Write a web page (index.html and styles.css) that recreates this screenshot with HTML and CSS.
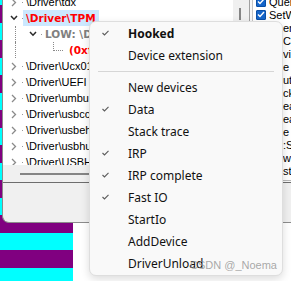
FILE: index.html
```html
<!DOCTYPE html>
<html>
<head>
  <meta charset="utf-8">
  <link rel="stylesheet" href="styles.css">
</head>
<body>
  <div class="window">
    <div class="panes">
      <div class="tree">
        <div class="tree-rows">
          <div class="tree-inner">
            <div class="row lvl0"><span class="exp"><svg width="6" height="9" viewBox="0 0 6 9"><path d="M1 1l3.5 3.5L1 8" class="closed"/></svg></span><span class="dot"></span><span class="label">\Driver\tdx</span></div>
            <div class="row lvl0"><span class="exp"><svg width="8" height="6" viewBox="0 0 8 6"><path d="M1 1l3 3.2L7 1" class="open"/></svg></span><span class="dot"></span><span class="label sel red">\Driver\TPM</span></div>
            <div class="row lvl1"><span class="guide"></span><span class="exp"><svg width="8" height="6" viewBox="0 0 8 6"><path d="M1 1l3 3.2L7 1" class="open"/></svg></span><span class="dot"></span><span class="label grey">LOW: \Device\00000027</span></div>
            <div class="row lvl2"><span class="guide"></span><span class="elbow"></span><span class="label red">(0xffffa20c5e3b8f40)</span></div>
            <div class="row lvl0"><span class="exp"><svg width="6" height="9" viewBox="0 0 6 9"><path d="M1 1l3.5 3.5L1 8" class="closed"/></svg></span><span class="dot"></span><span class="label">\Driver\Ucx01000</span></div>
            <div class="row lvl0"><span class="exp"><svg width="6" height="9" viewBox="0 0 6 9"><path d="M1 1l3.5 3.5L1 8" class="closed"/></svg></span><span class="dot"></span><span class="label">\Driver\UEFI</span></div>
            <div class="row lvl0"><span class="exp"><svg width="6" height="9" viewBox="0 0 6 9"><path d="M1 1l3.5 3.5L1 8" class="closed"/></svg></span><span class="dot"></span><span class="label">\Driver\umbus</span></div>
            <div class="row lvl0"><span class="exp"><svg width="6" height="9" viewBox="0 0 6 9"><path d="M1 1l3.5 3.5L1 8" class="closed"/></svg></span><span class="dot"></span><span class="label">\Driver\usbccgp</span></div>
            <div class="row lvl0"><span class="exp"><svg width="6" height="9" viewBox="0 0 6 9"><path d="M1 1l3.5 3.5L1 8" class="closed"/></svg></span><span class="dot"></span><span class="label">\Driver\usbehci</span></div>
            <div class="row lvl0"><span class="exp"><svg width="6" height="9" viewBox="0 0 6 9"><path d="M1 1l3.5 3.5L1 8" class="closed"/></svg></span><span class="dot"></span><span class="label">\Driver\usbhub</span></div>
            <div class="row lvl0"><span class="exp"><svg width="6" height="9" viewBox="0 0 6 9"><path d="M1 1l3.5 3.5L1 8" class="closed"/></svg></span><span class="dot"></span><span class="label">\Driver\USBHUB3</span></div>
          </div>
        </div>
        <div class="hscroll"><div class="hthumb"></div></div>
      </div>
      <div class="vscroll"><div class="vthumb"></div></div>
      <div class="list">
        <div class="list-inner">
          <div class="list-rows">
            <div class="lrow"><span class="cb"><svg width="8" height="7" viewBox="0 0 8 7"><path d="M1 3.5l2 2L7 1"/></svg></span><span class="ltext">Query</span></div>
            <div class="lrow"><span class="cb"><svg width="8" height="7" viewBox="0 0 8 7"><path d="M1 3.5l2 2L7 1"/></svg></span><span class="ltext">SetWmi</span></div>
            <div class="lrow"><span class="ltext tail">er</span></div>
            <div class="lrow"><span class="ltext tail">Co</span></div>
            <div class="lrow"><span class="ltext tail">vi</span></div>
            <div class="lrow"><span class="ltext tail">e</span></div>
            <div class="lrow"><span class="ltext tail">ut</span></div>
            <div class="lrow"><span class="ltext tail">ck</span></div>
            <div class="lrow"><span class="ltext tail">ea</span></div>
            <div class="lrow"><span class="ltext tail">ea</span></div>
            <div class="lrow"><span class="ltext tail">e</span></div>
            <div class="lrow"><span class="ltext tail">:S</span></div>
            <div class="lrow"><span class="ltext tail">w</span></div>
            <div class="lrow"><span class="ltext tail">st</span></div>
          </div>
        </div>
      </div>
    </div>
  </div>

  <!-- context menu popup -->
  <div class="menu">
    <div class="item bold"><span class="chk"><svg width="7" height="6" viewBox="0 0 7 6"><path d="M0.5 3l2 2L6.5 0.8"/></svg></span>Hooked</div>
    <div class="item"><span class="chk"></span>Device extension</div>
    <div class="sep"></div>
    <div class="item"><span class="chk"></span>New devices</div>
    <div class="item"><span class="chk"><svg width="7" height="6" viewBox="0 0 7 6"><path d="M0.5 3l2 2L6.5 0.8"/></svg></span>Data</div>
    <div class="item"><span class="chk"></span>Stack trace</div>
    <div class="item"><span class="chk"><svg width="7" height="6" viewBox="0 0 7 6"><path d="M0.5 3l2 2L6.5 0.8"/></svg></span>IRP</div>
    <div class="item"><span class="chk"><svg width="7" height="6" viewBox="0 0 7 6"><path d="M0.5 3l2 2L6.5 0.8"/></svg></span>IRP complete</div>
    <div class="item"><span class="chk"><svg width="7" height="6" viewBox="0 0 7 6"><path d="M0.5 3l2 2L6.5 0.8"/></svg></span>Fast IO</div>
    <div class="item"><span class="chk"></span>StartIo</div>
    <div class="item"><span class="chk"></span>AddDevice</div>
    <div class="item"><span class="chk"></span>DriverUnload</div>
  </div>

  <div class="watermark">CSDN @_Noema</div>
</body>
</html>
```

FILE: styles.css
```css
body {
  margin: 0;
  width: 291px;
  height: 281px;
  overflow: hidden;
  position: relative;
  background-color: #fff;
  background-image: linear-gradient(#00ffff 0 50%, #800080 50% 100%);
  background-size: 73px 35px;
  background-repeat: repeat-y;
  background-position: 0 23px;
  font-family: "Liberation Sans", Arial, sans-serif;
}

/* main window */
.window {
  margin-left: 2px;
  height: 223px;
  box-sizing: border-box;
  background: #f0f0f0;
  border-left: 1px solid #8c8c8c;
  border-bottom: 1px solid #8c8c8c;
  border-bottom-left-radius: 7px;
  overflow: hidden;
}

.panes {
  display: flex;
  height: 183px;
  box-sizing: border-box;
  border-bottom: 1px solid #6d6d6d;
}

.tree {
  width: 230px;
  flex-shrink: 0;
  display: flex;
  flex-direction: column;
}

.tree-rows {
  height: 165px;
  overflow: hidden;
  background: #fff;
}

.tree-inner {
  margin-top: -6px;
}

.row {
  display: flex;
  align-items: center;
  height: 16px;
  font-size: 11px;
  white-space: nowrap;
}

.lvl0 { padding-left: 6px; }
.lvl1, .lvl2 { padding-left: 12px; }

.exp {
  width: 10px;
  height: 16px;
  display: flex;
  align-items: center;
  justify-content: center;
}

.lvl1 .exp { margin-left: 12px; }

.exp svg { display: block; }

.closed {
  fill: none;
  stroke: #8a8a8a;
  stroke-width: 1.3;
}

.open {
  fill: none;
  stroke: #2b2b2b;
  stroke-width: 1.5;
}

.dot {
  width: 4px;
  height: 1px;
  background: linear-gradient(to right, transparent 3px, #9a9a9a 3px);
}

.guide {
  width: 0;
  height: 16px;
  border-left: 1px dotted #8a8a8a;
}

.elbow {
  align-self: flex-start;
  margin-left: 37px;
  width: 9px;
  height: 8px;
  border-left: 1px dotted #8a8a8a;
  border-bottom: 1px dotted #8a8a8a;
}

.label {
  padding: 0 3px;
  line-height: 16px;
  color: #000;
}

.lvl2 .label { margin-left: 3px; }

.red {
  color: #ff0000;
  font-family: "DejaVu Sans", sans-serif;
  font-weight: bold;
  font-size: 10.5px;
}

.grey {
  color: #808080;
  font-family: "DejaVu Sans", sans-serif;
  font-weight: bold;
  font-size: 10.5px;
}

.sel { background: #cce8ff; }

.hscroll {
  height: 17px;
  background: #f0f0f0;
}

.hthumb {
  margin: 8px 0 0 17px;
  width: 250px;
  height: 2px;
  background: #858585;
}

.vscroll {
  width: 16px;
  flex-shrink: 0;
  background: #f0f0f0;
}

.vthumb {
  margin: 8px 0 0 6px;
  width: 2px;
  height: 12px;
  background: #858585;
}

/* right hand list */
.list {
  flex: 1;
  min-width: 0;
  border-left: 1px solid #a0a0a0;
  padding-left: 2px;
  background: #f7f7f7;
}

.list-inner {
  height: 181px;
  overflow: hidden;
  background: #fff;
  border-left: 1px solid #c4c4c4;
  border-bottom: 1px solid #b8b8b8;
  box-sizing: border-box;
}

.list-rows {
  margin-top: -5px;
}

.lrow {
  display: flex;
  align-items: center;
  height: 13px;
  font-size: 11px;
  white-space: nowrap;
}

.cb {
  flex-shrink: 0;
  margin-left: 3px;
  width: 10px;
  height: 10px;
  box-sizing: border-box;
  background: #1565c9;
  border: 1px solid #0a4fa6;
  border-radius: 1px;
  display: flex;
  align-items: center;
  justify-content: center;
}

.cb svg path {
  fill: none;
  stroke: #fff;
  stroke-width: 1.4;
}

.ltext {
  margin-left: 3px;
  color: #000;
}

.tail { margin-left: 30px; }

/* popup menu */
.menu {
  position: absolute;
  left: 89px;
  top: 21px;
  width: 194px;
  height: 255px;
  box-sizing: border-box;
  padding-bottom: 1px;
  background: #f9f9f9;
  border: 1px solid #dedede;
  border-radius: 7px;
  box-shadow: 0 3px 8px rgba(0, 0, 0, 0.14);
  font-family: "Noto Sans", sans-serif;
  font-size: 12px;
  color: #111;
}

.item {
  height: 22px;
  display: flex;
  align-items: center;
  white-space: nowrap;
}

.item.bold { font-weight: bold; }

.chk {
  width: 38px;
  box-sizing: border-box;
  padding-left: 12px;
  display: flex;
  align-items: center;
}

.chk svg path {
  fill: none;
  stroke: #5c5c5c;
  stroke-width: 1.1;
}

.sep {
  height: 1px;
  margin: 5px 8px 4px;
  background: #d6d6d6;
}

.watermark {
  position: absolute;
  left: 190px;
  top: 259px;
  font-size: 11px;
  color: rgba(140, 140, 140, 0.75);
  white-space: nowrap;
}
```
